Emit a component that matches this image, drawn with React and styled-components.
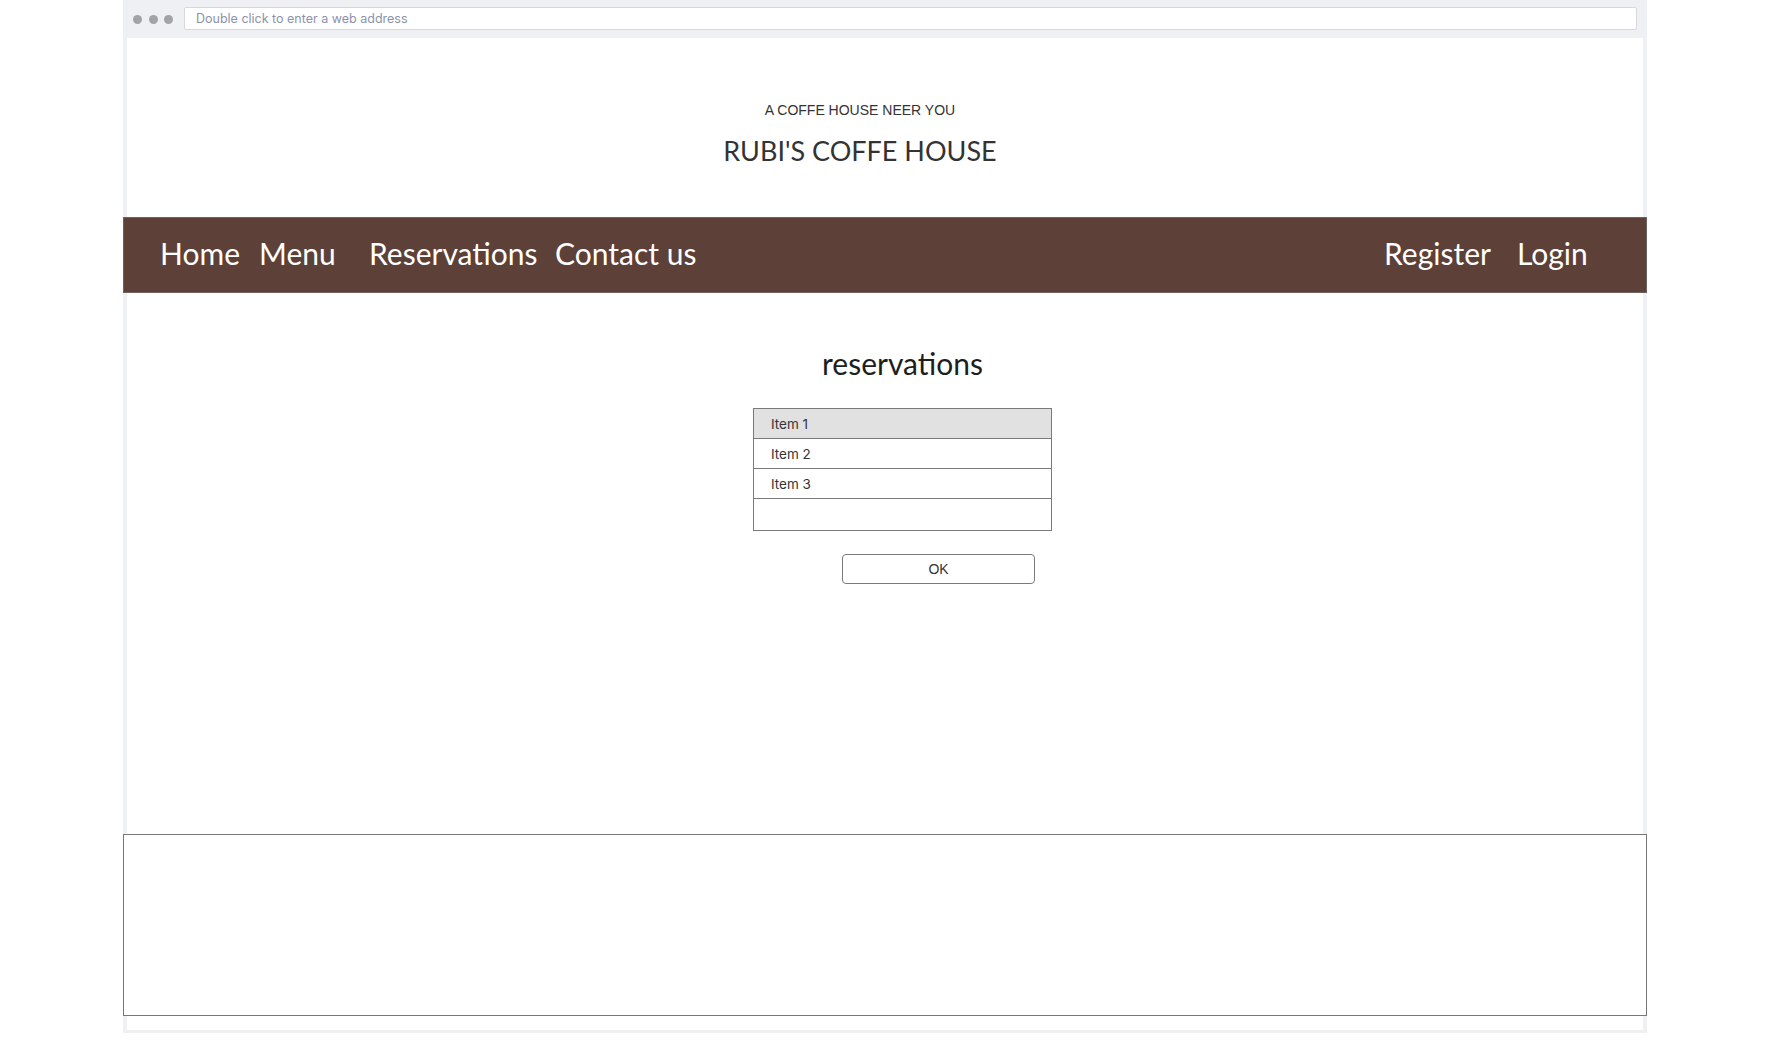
import styled, { createGlobalStyle } from "styled-components";

const GlobalStyle = createGlobalStyle`
  html, body {
    margin: 0;
    padding: 0;
    background: #ffffff;
  }
  body {
    font-family: "Liberation Sans", Arial, sans-serif;
  }
`;

const leftLinks = [
  { label: "Home", w: 99 },
  { label: "Menu", w: 110 },
  { label: "Reservations", w: 186 },
  { label: "Contact us", w: 149 },
];

const rightLinks = [
  { label: "Register", w: 133 },
  { label: "Login", w: 72 },
];

const items = ["Item 1", "Item 2", "Item 3", ""];

function App() {
  return (
    <>
      <GlobalStyle />
      <Frame>
        <TopBar>
          <Dots>
            <Dot />
            <Dot />
            <Dot />
          </Dots>
          <AddressBar>Double click to enter a web address</AddressBar>
        </TopBar>

        <Content>
          <Header>
            <Tagline>A COFFE HOUSE NEER YOU</Tagline>
            <Title>RUBI'S COFFE HOUSE</Title>
          </Header>

          <Nav>
            <NavGroup>
              {leftLinks.map((l) => (
                <NavLink key={l.label} $w={l.w}>
                  {l.label}
                </NavLink>
              ))}
            </NavGroup>
            <NavGroup>
              {rightLinks.map((l) => (
                <NavLink key={l.label} $w={l.w}>
                  {l.label}
                </NavLink>
              ))}
            </NavGroup>
          </Nav>

          <Main>
            <Column>
              <Heading>reservations</Heading>
              <List>
                {items.map((it, i) => (
                  <ListRow key={i} $selected={i === 0} $last={i === items.length - 1}>
                    {it}
                  </ListRow>
                ))}
              </List>
              <OkButton type="button">OK</OkButton>
            </Column>
          </Main>

          <Footer />
        </Content>
      </Frame>
    </>
  );
}

const Frame = styled.div`
  width: 1524px;
  height: 1033px;
  margin-left: 123px;
  background: #eef0f3;
  display: flex;
  flex-direction: column;
`;

const TopBar = styled.div`
  height: 38px;
  display: flex;
  align-items: center;
  padding: 0 10px;
  box-sizing: border-box;
`;

const Dots = styled.div`
  display: flex;
  gap: 6.5px;
  margin-right: 11px;
`;

const Dot = styled.span`
  width: 9px;
  height: 9px;
  border-radius: 50%;
  background: #a3a3a5;
`;

const AddressBar = styled.div`
  flex: 1;
  height: 23px;
  margin-top: -1px;
  box-sizing: border-box;
  background: #ffffff;
  border: 1px solid #d9d9dc;
  border-radius: 2px;
  padding-left: 11px;
  display: flex;
  align-items: center;
  font-family: Inter, "Noto Sans", sans-serif;
  font-size: 12.5px;
  color: #8c92ab;
`;

const Content = styled.div`
  flex: 1;
  margin: 0 4px 3px;
  background: #ffffff;
  display: flex;
  flex-direction: column;
  padding-bottom: 14px;
`;

const Header = styled.header`
  height: 179px;
  box-sizing: border-box;
  padding: 64px 50px 0 0;
  display: flex;
  flex-direction: column;
  align-items: center;
`;

const Tagline = styled.div`
  font-family: "Liberation Sans", Arial, sans-serif;
  font-size: 14px;
  line-height: 16px;
  color: #333333;
`;

const Title = styled.h1`
  margin: 17px 0 0;
  font-family: Lato, "Open Sans", sans-serif;
  font-weight: 400;
  font-size: 27px;
  line-height: 32px;
  color: #333333;
`;

const Nav = styled.nav`
  height: 76px;
  margin: 0 -4px;
  box-sizing: border-box;
  background: #5d4037;
  border: 1px solid #6e625e;
  display: flex;
  justify-content: space-between;
  padding: 17px 57px 0 36px;
`;

const NavGroup = styled.div`
  display: flex;
`;

const NavLink = styled.a`
  width: ${(p) => p.$w}px;
  font-family: Lato, "Open Sans", sans-serif;
  font-size: 30px;
  line-height: 36px;
  color: #ffffff;
  white-space: nowrap;
  cursor: pointer;
`;

const Main = styled.main`
  flex: 1;
  padding: 52px 0 0 35px;
  display: flex;
  justify-content: center;
`;

const Column = styled.div`
  width: 299px;
  display: flex;
  flex-direction: column;
`;

const Heading = styled.h2`
  margin: 0;
  text-align: center;
  font-family: Lato, "Open Sans", sans-serif;
  font-weight: 400;
  font-size: 30px;
  line-height: 36px;
  color: #1e1e1e;
`;

const List = styled.div`
  margin-top: 27px;
  border: 1px solid #7a7a7a;
  display: flex;
  flex-direction: column;
`;

const ListRow = styled.div`
  height: ${(p) => (p.$last ? 31 : 29)}px;
  border-bottom: ${(p) => (p.$last ? "none" : "1px solid #7a7a7a")};
  background: ${(p) => (p.$selected ? "#e1e1e1" : "#ffffff")};
  padding-left: 17px;
  display: flex;
  align-items: center;
  font-family: Inter, "Noto Sans", sans-serif;
  font-size: 13.5px;
  color: #333333;
`;

const OkButton = styled.button`
  margin: 23px 0 0 89px;
  width: 193px;
  height: 30px;
  box-sizing: border-box;
  background: #ffffff;
  border: 1px solid #7a7a7a;
  border-radius: 4px;
  font-family: "Liberation Sans", Arial, sans-serif;
  font-size: 14px;
  color: #333333;
  padding: 0;
`;

const Footer = styled.footer`
  height: 182px;
  margin: 0 -4px;
  box-sizing: border-box;
  border: 1.5px solid #777777;
  background: #ffffff;
`;

export default App;
